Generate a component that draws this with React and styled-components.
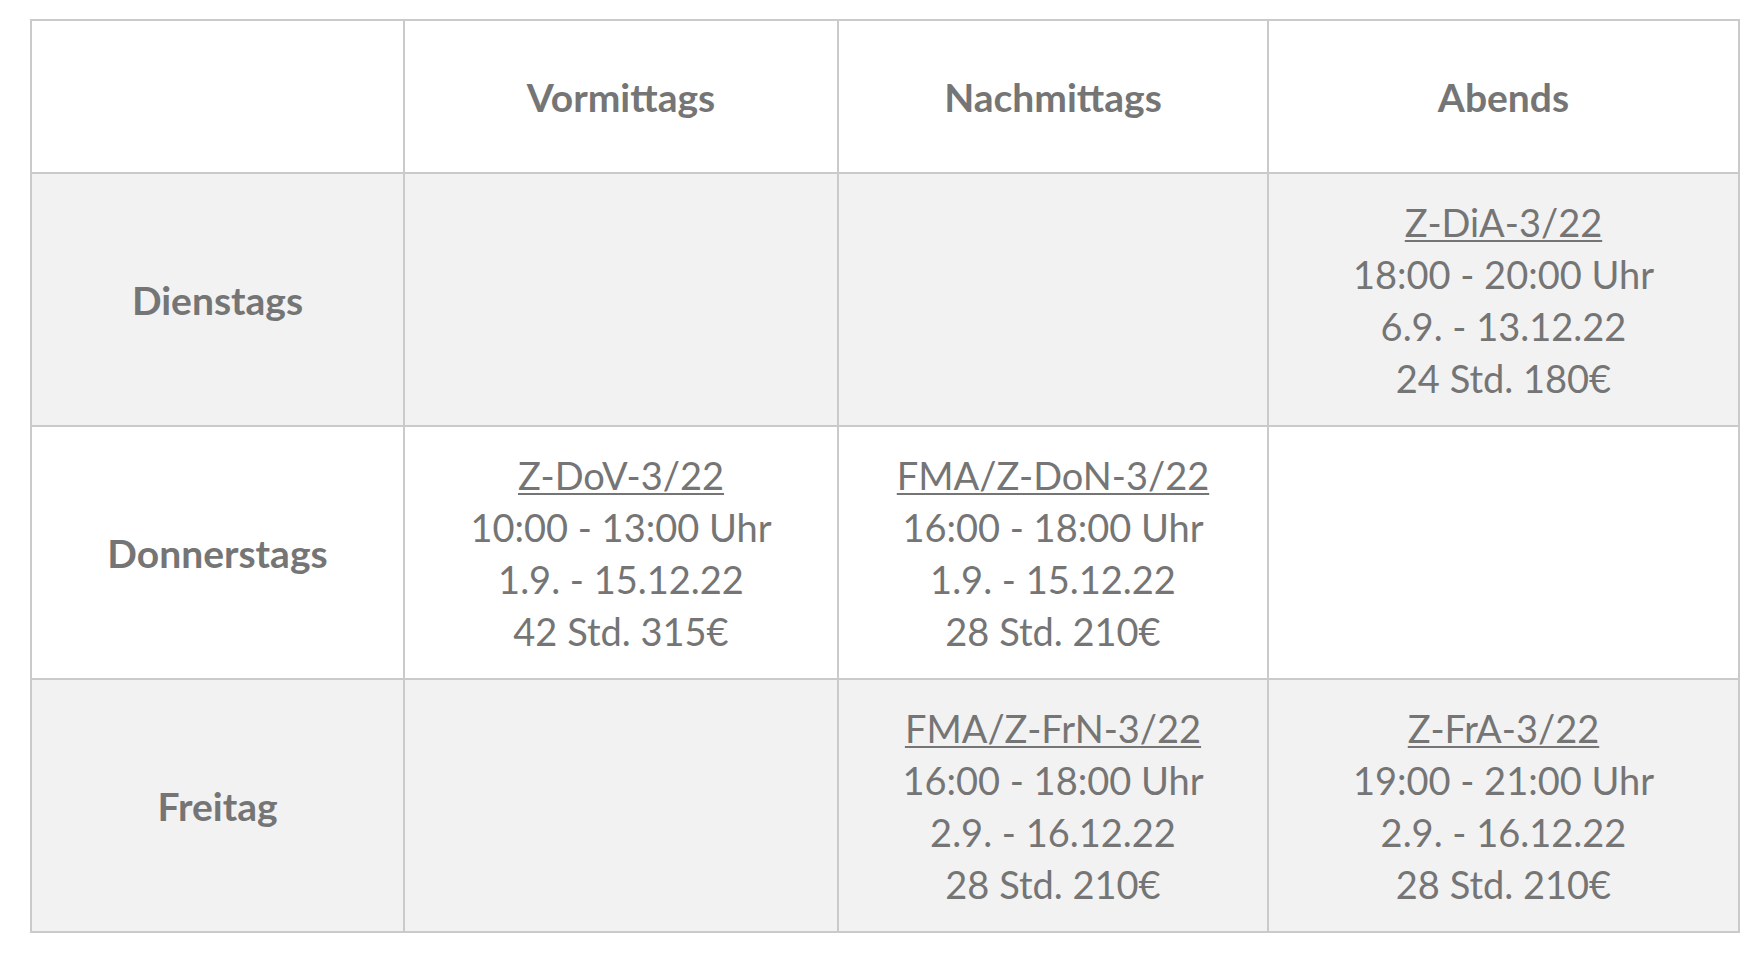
import React from "react";
import styled, { createGlobalStyle } from "styled-components";

const GlobalStyle = createGlobalStyle`
  html, body {
    margin: 0;
    padding: 0;
    background: #ffffff;
  }
  body {
    font-family: Lato, "Open Sans", "Liberation Sans", sans-serif;
    color: #757575;
  }
`;

const Page = styled.div`
  padding: 19px 0 0 30px;
`;

const Table = styled.table`
  border-collapse: collapse;
  table-layout: fixed;
  width: 1708px;
`;

const HeadCell = styled.th`
  height: 151px;
  border: 2px solid #cacaca;
  background: #ffffff;
  font-size: 39px;
  font-weight: 700;
  text-align: center;
  vertical-align: middle;
  padding: 0;
`;

const Row = styled.tr`
  background: ${(p) => (p.$shaded ? "#f2f2f2" : "#ffffff")};
`;

const DayCell = styled.th`
  height: 251px;
  border: 2px solid #cacaca;
  font-size: 39px;
  font-weight: 700;
  text-align: center;
  vertical-align: middle;
  padding: 0;
`;

const Cell = styled.td`
  border: 2px solid #cacaca;
  font-size: 38px;
  font-weight: 400;
  line-height: 52px;
  text-align: center;
  vertical-align: middle;
  padding: 0;
`;

const Code = styled.div`
  text-decoration: underline;
  text-decoration-thickness: 2px;
  text-underline-offset: 3px;
`;

const Line = styled.div``;

const columns = [
  { label: "", width: 373 },
  { label: "Vormittags", width: 434 },
  { label: "Nachmittags", width: 430 },
  { label: "Abends", width: 471 },
];

const rows = [
  {
    day: "Dienstags",
    shaded: true,
    slots: [
      null,
      null,
      ["Z-DiA-3/22", "18:00 - 20:00 Uhr", "6.9. - 13.12.22", "24 Std. 180€"],
    ],
  },
  {
    day: "Donnerstags",
    shaded: false,
    slots: [
      ["Z-DoV-3/22", "10:00 - 13:00 Uhr", "1.9. - 15.12.22", "42 Std. 315€"],
      ["FMA/Z-DoN-3/22", "16:00 - 18:00 Uhr", "1.9. - 15.12.22", "28 Std. 210€"],
      null,
    ],
  },
  {
    day: "Freitag",
    shaded: true,
    slots: [
      null,
      ["FMA/Z-FrN-3/22", "16:00 - 18:00 Uhr", "2.9. - 16.12.22", "28 Std. 210€"],
      ["Z-FrA-3/22", "19:00 - 21:00 Uhr", "2.9. - 16.12.22", "28 Std. 210€"],
    ],
  },
];

function Slot({ data }) {
  if (!data) return <Cell />;
  const [code, ...rest] = data;
  return (
    <Cell>
      <Code>{code}</Code>
      {rest.map((t) => (
        <Line key={t}>{t}</Line>
      ))}
    </Cell>
  );
}

export default function App() {
  return (
    <Page>
      <GlobalStyle />
      <Table>
        <colgroup>
          {columns.map((c, i) => (
            <col key={i} style={{ width: c.width }} />
          ))}
        </colgroup>
        <thead>
          <tr>
            {columns.map((c, i) => (
              <HeadCell key={i}>{c.label}</HeadCell>
            ))}
          </tr>
        </thead>
        <tbody>
          {rows.map((r) => (
            <Row key={r.day} $shaded={r.shaded}>
              <DayCell>{r.day}</DayCell>
              {r.slots.map((s, i) => (
                <Slot key={i} data={s} />
              ))}
            </Row>
          ))}
        </tbody>
      </Table>
    </Page>
  );
}
